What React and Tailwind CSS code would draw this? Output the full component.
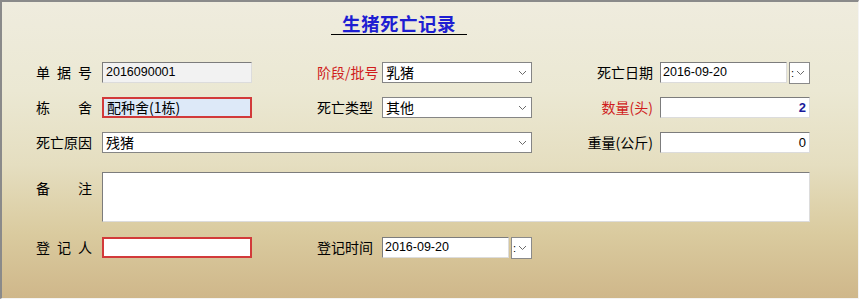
import React from "react";

const CJK = "font-['Noto_Sans_CJK_SC','Noto_Sans',sans-serif]";
const NUM = "font-['Liberation_Sans','Noto_Sans_CJK_SC',sans-serif]";

function Chevron() {
  return (
    <svg width="9" height="6" viewBox="0 0 9 6" className="shrink-0">
      <polyline points="1,1 4.5,4.5 8,1" fill="none" stroke="#6b6b6b" strokeWidth="1" />
    </svg>
  );
}

function SpacedLabel({ chars }) {
  return (
    <div className={`w-[56px] flex justify-between text-[14px] leading-[21px] text-black ${CJK}`}>
      {chars.map((c, i) => (
        <span key={i}>{c}</span>
      ))}
    </div>
  );
}

const sunken =
  "border border-t-[#7c7c7c] border-l-[#7c7c7c] border-r-[#dcdcdc] border-b-[#dcdcdc]";

function TextBox({ value, className = "", textClass = "", align = "left" }) {
  return (
    <div
      className={`h-[21px] flex items-center px-[3px] ${align === "right" ? "justify-end" : ""} ${className}`}
    >
      <span className={`whitespace-nowrap leading-[19px] ${textClass}`}>{value}</span>
    </div>
  );
}

function Combo({ value, width }) {
  return (
    <div
      className={`${width} h-[21px] bg-white border border-[#858585] flex items-center justify-between pl-[3px] pr-[4px]`}
    >
      <span className={`text-[14px] leading-[19px] text-black ${CJK}`}>{value}</span>
      <Chevron />
    </div>
  );
}

function DateBox({ value }) {
  return (
    <div className="flex items-center gap-[2px]">
      <div className={`w-[127px] h-[21px] bg-white ${sunken} flex items-center px-[2px]`}>
        <span className={`text-[12.5px] leading-[19px] text-black ${NUM}`}>{value}</span>
      </div>
      <div className="w-[21px] h-[22px] bg-white border border-[#8a8a8a] flex items-center pl-[1px] gap-[2px]">
        <span className={`text-[11px] leading-[12px] text-black ${NUM}`}>:</span>
        <Chevron />
      </div>
    </div>
  );
}

function LabelB({ text, red }) {
  return (
    <div
      className={`w-[65px] text-[14px] leading-[21px] whitespace-nowrap ${red ? "text-[#d01c1c]" : "text-black"} ${CJK}`}
    >
      {text}
    </div>
  );
}

function LabelC({ text, red }) {
  return (
    <div
      className={`w-[128px] pr-[7px] text-right text-[14px] leading-[21px] whitespace-nowrap ${red ? "text-[#d01c1c]" : "text-black"} ${CJK}`}
    >
      {text}
    </div>
  );
}

export default function App() {
  return (
    <div className="w-[860px] h-[300px] bg-white">
      <div className="w-[859px] h-[299px] border-t-2 border-l-2 border-t-[#8a8a8a] border-l-[#8a8a8a] border-r border-b border-r-[#f4f4f4] border-b-[#f4f4f4] bg-[linear-gradient(180deg,#efecde_0%,#ebe8d3_30%,#e5dec0_55%,#dacb9f_78%,#cfb78a_100%)] flex flex-col">
        {/* Title */}
        <div className="mt-[10px] ml-[329px] w-[136px] h-[23px] border-b border-black flex justify-center">
          <span className={`text-[18.5px] leading-[22px] font-bold text-[#1e1ed2] tracking-[0.5px] ${CJK}`}>
            生猪死亡记录
          </span>
        </div>

        {/* Row 1 */}
        <div className="mt-[27px] pl-[34px] flex items-center h-[21px]">
          <SpacedLabel chars={["单", "据", "号"]} />
          <TextBox
            value="2016090001"
            className={`ml-[10px] w-[150px] bg-[#f2f2f2] ${sunken}`}
            textClass={`text-[12.5px] text-black ${NUM}`}
          />
          <div className="ml-[65px]">
            <LabelB text="阶段/批号" red />
          </div>
          <Combo value="乳猪" width="w-[150px]" />
          <LabelC text="死亡日期" />
          <DateBox value="2016-09-20" />
        </div>

        {/* Row 2 */}
        <div className="mt-[14px] pl-[34px] flex items-center h-[21px]">
          <SpacedLabel chars={["栋", "舍"]} />
          <TextBox
            value="配种舍(1栋)"
            className="ml-[10px] w-[150px] bg-[#dde9f8] border-2 border-[#d23a3a]"
            textClass={`text-[14px] text-black ${CJK}`}
          />
          <div className="ml-[65px]">
            <LabelB text="死亡类型" />
          </div>
          <Combo value="其他" width="w-[150px]" />
          <LabelC text="数量(头)" red />
          <TextBox
            value="2"
            align="right"
            className={`w-[150px] bg-white ${sunken}`}
            textClass={`text-[13px] font-bold text-[#1a1a9c] ${NUM}`}
          />
        </div>

        {/* Row 3 */}
        <div className="mt-[14px] pl-[34px] flex items-center h-[21px]">
          <div className={`w-[56px] text-[14px] leading-[21px] whitespace-nowrap text-black ${CJK}`}>死亡原因</div>
          <div className="ml-[10px]">
            <Combo value="残猪" width="w-[430px]" />
          </div>
          <LabelC text="重量(公斤)" />
          <TextBox
            value="0"
            align="right"
            className={`w-[150px] bg-white ${sunken}`}
            textClass={`text-[13px] text-black ${NUM}`}
          />
        </div>

        {/* Row 4 */}
        <div className="mt-[19px] pl-[34px] flex items-start">
          <div className="pt-[6px]">
            <SpacedLabel chars={["备", "注"]} />
          </div>
          <div className={`ml-[10px] w-[708px] h-[50px] bg-white ${sunken}`} />
        </div>

        {/* Row 5 */}
        <div className="mt-[15px] pl-[34px] flex items-center h-[21px]">
          <SpacedLabel chars={["登", "记", "人"]} />
          <div className="ml-[10px] w-[150px] h-[21px] bg-white border-2 border-[#d23a3a]" />
          <div className="ml-[65px]">
            <LabelB text="登记时间" />
          </div>
          <DateBox value="2016-09-20" />
        </div>
      </div>
    </div>
  );
}
